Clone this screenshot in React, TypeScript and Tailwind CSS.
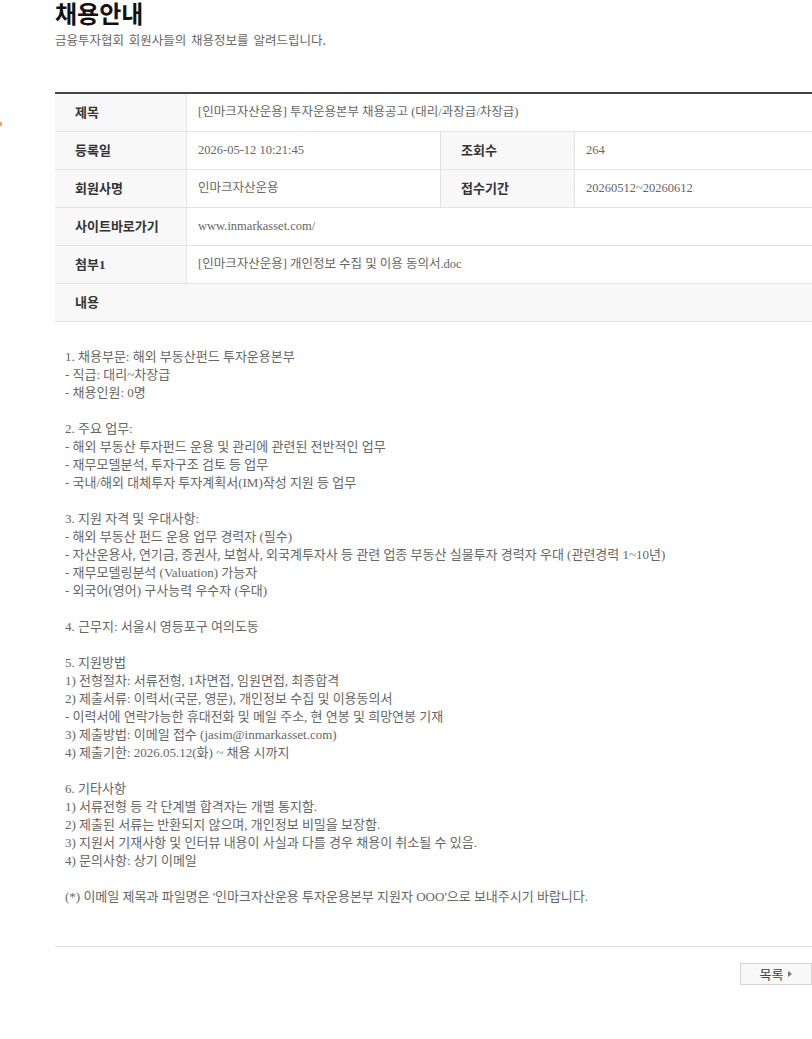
import React from 'react';

const serif = "font-['Liberation_Serif','Noto_Sans_CJK_KR',serif]";

const content: string[] = [
    '1. 채용부문: 해외 부동산펀드 투자운용본부',
    '- 직급: 대리~차장급',
    '- 채용인원: 0명',
    '',
    '2. 주요 업무:',
    '- 해외 부동산 투자펀드 운용 및 관리에 관련된 전반적인 업무',
    '- 재무모델분석, 투자구조 검토 등 업무',
    '- 국내/해외 대체투자 투자계획서(IM)작성 지원 등 업무',
    '',
    '3. 지원 자격 및 우대사항:',
    '- 해외 부동산 펀드 운용 업무 경력자 (필수)',
    '- 자산운용사, 연기금, 증권사, 보험사, 외국계투자사 등 관련 업종 부동산 실물투자 경력자 우대 (관련경력 1~10년)',
    '- 재무모델링분석 (Valuation) 가능자',
    '- 외국어(영어) 구사능력 우수자 (우대)',
    '',
    '4. 근무지: 서울시 영등포구 여의도동',
    '',
    '5. 지원방법',
    '1) 전형절차: 서류전형, 1차면접, 임원면접, 최종합격',
    '2) 제출서류: 이력서(국문, 영문), 개인정보 수집 및 이용동의서',
    '- 이력서에 연락가능한 휴대전화 및 메일 주소, 현 연봉 및 희망연봉 기재',
    '3) 제출방법: 이메일 접수 (jasim@inmarkasset.com)',
    '4) 제출기한: 2026.05.12(화) ~ 채용 시까지',
    '',
    '6. 기타사항',
    '1) 서류전형 등 각 단계별 합격자는 개별 통지함.',
    '2) 제출된 서류는 반환되지 않으며, 개인정보 비밀을 보장함.',
    '3) 지원서 기재사항 및 인터뷰 내용이 사실과 다를 경우 채용이 취소될 수 있음.',
    '4) 문의사항: 상기 이메일',
    '',
    "(*) 이메일 제목과 파일명은 '인마크자산운용 투자운용본부 지원자 OOO'으로 보내주시기 바랍니다.",
];

const Label = ({ children, w }: { children: React.ReactNode; w: string }) => (
    <div className={`${w} shrink-0 h-full flex items-center pl-5 bg-[#f8f8f8] text-[13px] font-bold text-[#333] border-r border-[#e3e3e3]`}>
        {children}
    </div>
);

const Value = ({ children, w = 'flex-1' }: { children: React.ReactNode; w?: string }) => (
    <div className={`${w} h-full flex items-center pl-[11px] text-[12.5px] text-[#666] border-r border-[#e3e3e3] last:border-r-0`}>
        {children}
    </div>
);

export default function App() {
    return (
        <div className="relative min-h-[1039px] bg-white">
            <span className="absolute left-0 top-[122px] w-[2px] h-[4px] bg-[#f0a070]" />

            <div className="ml-[55px] w-[757px]">
                <h1 className="font-['Noto_Sans_CJK_KR',sans-serif] text-[24px] font-bold text-[#111] leading-[26px]">채용안내</h1>
                <p className="mt-[5px] font-['Noto_Sans_CJK_KR',sans-serif] text-[12.5px] text-[#666] leading-[18px] [word-spacing:2px]">
                    금융투자협회 회원사들의 채용정보를 알려드립니다.
                </p>

                <div className={`mt-[43px] border-t-2 border-[#444] ${serif}`}>
                    <div className="flex h-[38px] border-b border-[#e3e3e3]">
                        <Label w="w-[132px]">제목</Label>
                        <Value>[인마크자산운용] 투자운용본부 채용공고 (대리/과장급/차장급)</Value>
                    </div>
                    <div className="flex h-[38px] border-b border-[#e3e3e3]">
                        <Label w="w-[132px]">등록일</Label>
                        <Value w="w-[254px]">2026-05-12 10:21:45</Value>
                        <Label w="w-[134px]">조회수</Label>
                        <Value>264</Value>
                    </div>
                    <div className="flex h-[38px] border-b border-[#e3e3e3]">
                        <Label w="w-[132px]">회원사명</Label>
                        <Value w="w-[254px]">인마크자산운용</Value>
                        <Label w="w-[134px]">접수기간</Label>
                        <Value>20260512~20260612</Value>
                    </div>
                    <div className="flex h-[38px] border-b border-[#e3e3e3]">
                        <Label w="w-[132px]">사이트바로가기</Label>
                        <Value>www.inmarkasset.com/</Value>
                    </div>
                    <div className="flex h-[38px] border-b border-[#e3e3e3]">
                        <Label w="w-[132px]">첨부1</Label>
                        <Value>[인마크자산운용] 개인정보 수집 및 이용 동의서.doc</Value>
                    </div>
                    <div className="flex items-center h-[38px] pl-5 bg-[#f8f8f8] text-[13px] font-bold text-[#333] border-b border-[#e3e3e3]">
                        내용
                    </div>

                    <div className="pl-[10px] pt-[26px] pb-[40px] text-[13px] leading-[18px] text-[#666] border-b border-[#e3e3e3]">
                        {content.map((line, i) => (
                            <div key={i} className="h-[18px] whitespace-nowrap">{line}</div>
                        ))}
                    </div>
                </div>

                <div className="flex justify-end mt-[16px]">
                    <button className="flex items-center gap-[5px] h-[22px] w-[72px] justify-center border border-[#d4d4d4] bg-[#f8f8f8] font-['Noto_Sans_CJK_KR',sans-serif] text-[13px] text-[#444]">
                        목록
                        <svg width="4" height="6" viewBox="0 0 4 6"><path d="M0 0 L4 3 L0 6 Z" fill="#777" /></svg>
                    </button>
                </div>
            </div>
        </div>
    );
}
